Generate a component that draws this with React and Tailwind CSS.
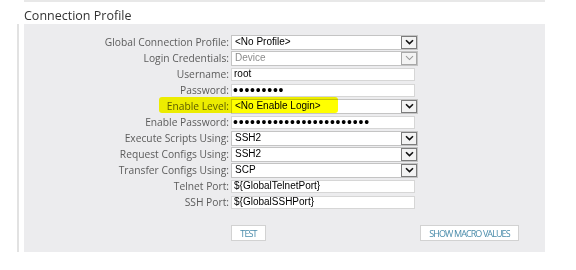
import React from "react";

const rows = [
  { label: "Global Connection Profile:", type: "select", value: "<No Profile>" },
  { label: "Login Credentials:", type: "select", value: "Device", disabled: true },
  { label: "Username:", type: "text", value: "root" },
  { label: "Password:", type: "password", count: 9 },
  { label: "Enable Level:", type: "select", value: "<No Enable Login>" },
  { label: "Enable Password:", type: "password", count: 24 },
  { label: "Execute Scripts Using:", type: "select", value: "SSH2" },
  { label: "Request Configs Using:", type: "select", value: "SSH2" },
  { label: "Transfer Configs Using:", type: "select", value: "SCP" },
  { label: "Telnet Port:", type: "text", value: "${GlobalTelnetPort}" },
  { label: "SSH Port:", type: "text", value: "${GlobalSSHPort}" },
];

const Chevron = ({ disabled }) => (
  <svg width="9" height="6" viewBox="0 0 9 6">
    <path
      d="M1 1.2 L4.5 4.6 L8 1.2"
      fill="none"
      stroke={disabled ? "#9a9a9a" : "#111"}
      strokeWidth={disabled ? 1.1 : 1.6}
    />
  </svg>
);

const Field = ({ row }) => {
  if (row.type === "select") {
    return (
      <div className="w-[187px] h-[15px] border border-[#c4c4c4] bg-white flex items-center">
        <span
          className={`flex-1 pl-[3px] text-[10px] leading-none font-['Liberation_Sans',Arial,sans-serif] ${
            row.disabled ? "text-[#8c8c8c]" : "text-black"
          }`}
        >
          {row.value}
        </span>
        <div
          className={`w-[16px] h-[13px] border flex items-center justify-center bg-[#f3f3f3] ${
            row.disabled ? "border-[#a8a8a8]" : "border-[#7c7c7c]"
          }`}
        >
          <Chevron disabled={row.disabled} />
        </div>
      </div>
    );
  }
  return (
    <div className="w-[184px] h-[13px] border border-[#d6d6d6] bg-white flex items-center overflow-hidden">
      {row.type === "password" ? (
        <span className="pl-[1px] text-[14px] leading-none tracking-[0.8px] text-black font-['Liberation_Sans',Arial,sans-serif]">
          {"•".repeat(row.count)}
        </span>
      ) : (
        <span className="pl-[2px] text-[10px] leading-none text-black font-['Liberation_Sans',Arial,sans-serif]">
          {row.value}
        </span>
      )}
    </div>
  );
};

const App = () => {
  return (
    <div className="w-[576px] h-[270px] bg-white relative font-['Open_Sans',sans-serif] overflow-hidden">
      <div className="ml-[24px] w-[521px] h-[2px] bg-[#e8e8e8]" />
      <div className="ml-[24px] mt-[5px] h-[17px] leading-[17px] text-[12.5px] text-[#333]">
        Connection Profile
      </div>
      <div className="flex ml-[17px]">
        <div className="w-[2px] h-[228px] bg-[#e2e2e2]" />
        <div className="ml-[5px] w-[521px] h-[228px] bg-[#ececee] pt-[10px]">
          {rows.map((row) => (
            <div key={row.label} className="flex items-center h-[16px]">
              <div className="w-[205px] text-right text-[10.25px] leading-[16px] text-[#5c5c5c]">
                {row.label}
              </div>
              <div className="ml-[2px]">
                <Field row={row} />
              </div>
            </div>
          ))}
          <div className="flex mt-[15px] ml-[207px]">
            <button className="w-[35px] h-[16px] bg-white border border-[#d2d2d2] text-[9px] tracking-[-0.9px] text-[#4a8cab] leading-none flex items-center justify-center">
              TEST
            </button>
            <button className="ml-[154px] w-[99px] h-[16px] bg-white border border-[#d2d2d2] text-[9px] tracking-[-0.9px] text-[#4a8cab] leading-none flex items-center justify-center">
              SHOW MACRO VALUES
            </button>
          </div>
        </div>
      </div>
      <div className="absolute left-[159px] top-[97px] w-[179px] h-[16px] rounded-[3px] bg-[#ffff00] mix-blend-multiply" />
    </div>
  );
};

export default App;
